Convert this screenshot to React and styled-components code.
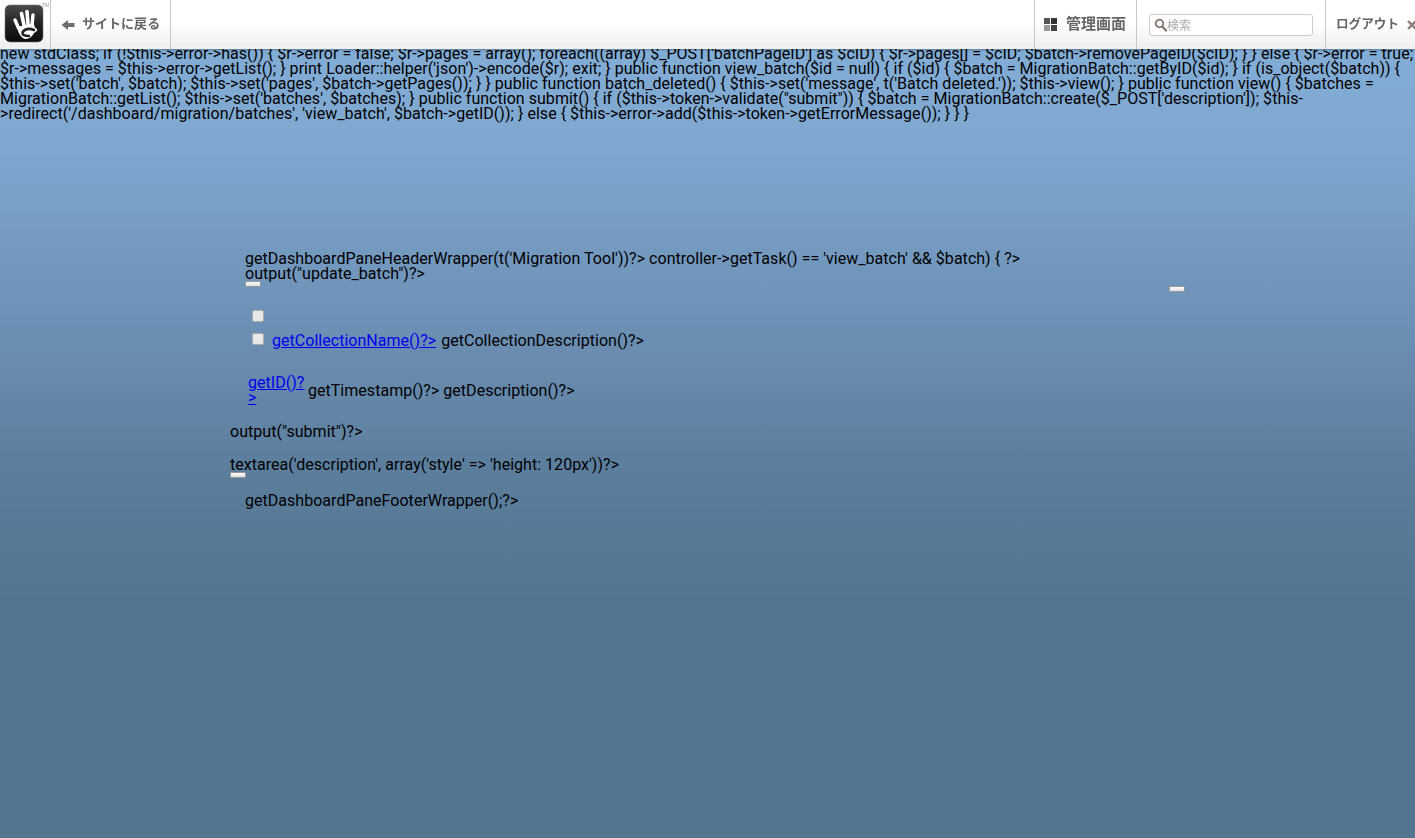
import React from 'react'
import styled, { createGlobalStyle } from 'styled-components'

const GlobalStyle = createGlobalStyle`
    html, body {
        margin: 0;
        padding: 0;
        height: 100%;
    }
    body {
        overflow: hidden;
        color: #000;
        font-family: Roboto, "Liberation Sans", sans-serif;
        font-size: 16px;
        line-height: 15px;
        letter-spacing: 0.03px;
    }
`

const Page = styled.div`
    height: 838px;
    overflow: hidden;
    background: linear-gradient(to bottom, #82afd9 0, #7fa8d0 140px, #6f93b9 300px, #5d7f9f 460px, #527590 600px, #527590 100%);
`

const Toolbar = styled.div`
    position: fixed;
    top: 0;
    left: 0;
    width: 1415px;
    height: 49px;
    display: flex;
    overflow: hidden;
    background: linear-gradient(to bottom, #ffffff 0, #ffffff 22px, #eeeeee 49px);
    box-shadow: 0 1px 2px rgba(0, 0, 0, 0.3);
`

const Segment = styled.div`
    display: flex;
    align-items: center;
    flex: none;
    height: 49px;
    box-sizing: border-box;
    width: ${(p) => p.$width}px;
    padding-left: ${(p) => p.$pad || 0}px;
    border-right: ${(p) => (p.$line ? '1px solid #c8c8c8' : 'none')};
    border-left: ${(p) => (p.$lineLeft ? '1px solid #c8c8c8' : 'none')};
`

const Spacer = styled.div`
    flex: 1;
`

const BarLabel = styled.span`
    color: #666;
    font-family: "Noto Sans CJK JP", sans-serif;
    font-weight: 700;
    font-size: ${(p) => p.$size}px;
    white-space: nowrap;
    margin-left: ${(p) => p.$gap}px;
    position: relative;
    top: -2px;
`

const CloseMark = styled.span`
    display: flex;
    margin-left: 8px;
`

const SearchBox = styled.div`
    display: flex;
    align-items: center;
    box-sizing: border-box;
    width: 164px;
    height: 22px;
    padding-left: 4px;
    background: #fff;
    border: 1px solid #ccc;
    border-radius: 3px;
    color: #aaa;
    font-family: "Noto Sans CJK JP", sans-serif;
    font-size: 12px;
`

const CodeDump = styled.div`
    padding-top: 46px;
    width: 1415px;
`

const Pane = styled.div`
    width: 970px;
    margin: 130px 0 0 230px;
`

const PaneInner = styled.div`
    padding-left: 15px;
`

const SmallButton = styled.button`
    display: block;
    box-sizing: border-box;
    width: 16px;
    height: 6px;
    padding: 0;
    background: linear-gradient(to bottom, #ffffff, #dddddd);
    border: 1px solid #999;
    border-radius: 1px;
`

const ButtonRow = styled.div`
    display: flex;
    justify-content: space-between;
    width: 940px;
    height: 11px;
`

const RightButton = styled(SmallButton)`
    margin-top: 5px;
`

const CheckList = styled.div`
    margin-top: 12px;
    padding-left: 7px;
`

const CheckRow = styled.div`
    display: flex;
    align-items: center;
    height: 23px;
`

const Check = styled.span`
    flex: none;
    box-sizing: border-box;
    width: 12px;
    height: 12px;
    margin-right: 8px;
    background: #e8e8e8;
    border: 1px solid #aaa;
    border-radius: 2px;
`

const RowLabel = styled.span`
    margin-top: 3px;
`

const RowText = styled.span`
    margin-left: 5px;
`

const Link = styled.a`
    color: #0000ee;
    text-decoration: underline;
`

const BatchRow = styled.div`
    display: flex;
    align-items: center;
    margin-top: 25px;
    padding-left: 3px;
`

const IdCell = styled.div`
    width: 56px;
    margin-right: 4px;
`

const BlockLine = styled.div`
    margin-top: ${(p) => p.$top}px;
`

const IndentLine = styled(BlockLine)`
    padding-left: 15px;
`

function HandLogo() {
    return (
        <svg width="50" height="49" viewBox="0 0 50 49">
            <defs>
                <linearGradient id="logoBg" x1="0" y1="0" x2="0" y2="1">
                    <stop offset="0" stopColor="#4a4a4a" />
                    <stop offset="0.5" stopColor="#222" />
                    <stop offset="1" stopColor="#0a0a0a" />
                </linearGradient>
            </defs>
            <rect x="5" y="5" width="38" height="37" rx="5" fill="url(#logoBg)" stroke="#777" strokeWidth="0.6" />
            <g stroke="#fff" strokeLinecap="round" fill="none">
                <path d="M15 20 L18.5 28" strokeWidth="3.4" />
                <path d="M21.5 13.5 L24 25" strokeWidth="3.6" />
                <path d="M27 11.5 L28 24" strokeWidth="3.6" />
                <path d="M33 15 L32 25" strokeWidth="3.4" />
            </g>
            <path d="M17 27 L34 23 Q34 28 37 29 Q38 31 34 33 Q31 39 25 39 Q19 37 17 27 Z" fill="#fff" />
            <path d="M34 30 Q26 27 22.5 32.5 Q22 36 29 36" stroke="#222" strokeWidth="2.6" fill="none" strokeLinecap="round" />
            <text x="42" y="6.5" fontSize="5" fill="#999" fontFamily="Liberation Sans, sans-serif">TM</text>
        </svg>
    )
}

function BackArrow() {
    return (
        <svg width="14" height="12" viewBox="0 0 14 12">
            <path d="M0.5 6 L7 1 V4 H13.5 V8 H7 V11 Z" fill="#6e6e6e" />
        </svg>
    )
}

function GridIcon() {
    return (
        <svg width="13" height="13" viewBox="0 0 13 13">
            <rect x="0" y="0" width="6" height="6" fill="#555" />
            <rect x="7" y="0" width="6" height="6" fill="#333" />
            <rect x="0" y="7" width="6" height="6" fill="#999" />
            <rect x="7" y="7" width="6" height="6" fill="#444" />
        </svg>
    )
}

function SearchGlass() {
    return (
        <svg width="13" height="14" viewBox="0 0 13 14">
            <circle cx="5.5" cy="5.5" r="3.8" fill="none" stroke="#86716c" strokeWidth="1.8" />
            <path d="M8.3 8.6 L12 12.6" stroke="#86716c" strokeWidth="2.2" strokeLinecap="round" />
        </svg>
    )
}

function CloseCross() {
    return (
        <svg width="10" height="10" viewBox="0 0 10 10">
            <path d="M1 1 L9 9 M9 1 L1 9" stroke="#8c7f7b" strokeWidth="2.4" />
        </svg>
    )
}

const code = `new stdClass; if (!$this->error->has()) { $r->error = false; $r->pages = array(); foreach((array) $_POST['batchPageID'] as $cID) { $r->pages[] = $cID; $batch->removePageID($cID); } } else { $r->error = true; $r->messages = $this->error->getList(); } print Loader::helper('json')->encode($r); exit; } public function view_batch($id = null) { if ($id) { $batch = MigrationBatch::getByID($id); } if (is_object($batch)) { $this->set('batch', $batch); $this->set('pages', $batch->getPages()); } } public function batch_deleted() { $this->set('message', t('Batch deleted.')); $this->view(); } public function view() { $batches = MigrationBatch::getList(); $this->set('batches', $batches); } public function submit() { if ($this->token->validate("submit")) { $batch = MigrationBatch::create($_POST['description']); $this->redirect('/dashboard/migration/batches', 'view_batch', $batch->getID()); } else { $this->error->add($this->token->getErrorMessage()); } } }`

export default function App() {
    return (
        <Page>
            <GlobalStyle />
            <Toolbar>
                <Segment $width={51} $line>
                    <HandLogo />
                </Segment>
                <Segment $width={120} $pad={10} $line>
                    <BackArrow />
                    <BarLabel $gap={7} $size={13}>サイトに戻る</BarLabel>
                </Segment>
                <Spacer />
                <Segment $width={102} $pad={9} $lineLeft>
                    <GridIcon />
                    <BarLabel $gap={9} $size={15}>管理画面</BarLabel>
                </Segment>
                <Segment $width={189} $pad={12} $lineLeft>
                    <SearchBox>
                        <SearchGlass />
                        検索
                    </SearchBox>
                </Segment>
                <Segment $width={90} $pad={10} $lineLeft>
                    <BarLabel $gap={0} $size={12.6}>ログアウト</BarLabel>
                    <CloseMark><CloseCross /></CloseMark>
                </Segment>
            </Toolbar>
            <CodeDump>{code}</CodeDump>
            <Pane>
                <PaneInner>
                    <div>getDashboardPaneHeaderWrapper(t('Migration Tool'))?&gt; controller-&gt;getTask() == 'view_batch' &amp;&amp; $batch) {'{'} ?&gt;</div>
                    <div>output("update_batch")?&gt;</div>
                    <ButtonRow>
                        <SmallButton />
                        <RightButton />
                    </ButtonRow>
                    <CheckList>
                        <CheckRow>
                            <Check />
                        </CheckRow>
                        <CheckRow>
                            <Check />
                            <RowLabel>
                                <Link href="#">getCollectionName()?&gt;</Link>
                                <RowText>getCollectionDescription()?&gt;</RowText>
                            </RowLabel>
                        </CheckRow>
                    </CheckList>
                    <BatchRow>
                        <IdCell>
                            <Link href="#">getID()?<br />&gt;</Link>
                        </IdCell>
                        <span>getTimestamp()?&gt; getDescription()?&gt;</span>
                    </BatchRow>
                </PaneInner>
                <BlockLine $top={19}>output("submit")?&gt;</BlockLine>
                <BlockLine $top={18}>textarea('description', array('style' =&gt; 'height: 120px'))?&gt;</BlockLine>
                <SmallButton />
                <IndentLine $top={15}>getDashboardPaneFooterWrapper();?&gt;</IndentLine>
            </Pane>
        </Page>
    )
}
